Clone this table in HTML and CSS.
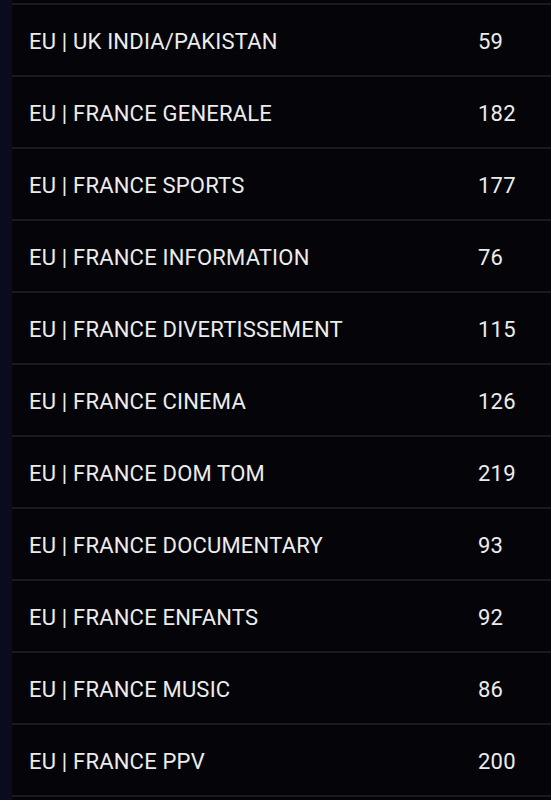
FILE: index.html
```html
<!DOCTYPE html>
<html>
<head>
<meta charset="utf-8">
<link rel="stylesheet" href="styles.css">
</head>
<body>
<div class="list">
  <div class="row"><span class="name">EU | UK INDIA/PAKISTAN</span><span class="count">59</span></div>
  <div class="row"><span class="name">EU | FRANCE GENERALE</span><span class="count">182</span></div>
  <div class="row"><span class="name">EU | FRANCE SPORTS</span><span class="count">177</span></div>
  <div class="row"><span class="name">EU | FRANCE INFORMATION</span><span class="count">76</span></div>
  <div class="row"><span class="name">EU | FRANCE DIVERTISSEMENT</span><span class="count">115</span></div>
  <div class="row"><span class="name">EU | FRANCE CINEMA</span><span class="count">126</span></div>
  <div class="row"><span class="name">EU | FRANCE DOM TOM</span><span class="count">219</span></div>
  <div class="row"><span class="name">EU | FRANCE DOCUMENTARY</span><span class="count">93</span></div>
  <div class="row"><span class="name">EU | FRANCE ENFANTS</span><span class="count">92</span></div>
  <div class="row"><span class="name">EU | FRANCE MUSIC</span><span class="count">86</span></div>
  <div class="row"><span class="name">EU | FRANCE PPV</span><span class="count">200</span></div>
  <div class="row"></div>
</div>
</body>
</html>
```
FILE: styles.css
```css
html, body {
  margin: 0;
  padding: 0;
  height: 800px;
  overflow: hidden;
  background: #0a0c1d;
}
.list {
  margin-left: 12px;
  height: 800px;
  overflow: hidden;
  padding-top: 3px;
  box-sizing: border-box;
  background: #050509;
  font-family: Roboto, "Noto Sans", sans-serif;
  font-size: 22px;
  letter-spacing: 0.2px;
  color: #ececec;
}
.row {
  display: flex;
  align-items: center;
  height: 70px;
  border-top: 2px solid #1a1a21;
  padding-left: 17px;
  padding-top: 2px;
  box-sizing: border-box;
  height: 72px;
}
.name {
  flex: 0 0 449px;
}
.count {
  flex: 1;
}
```
